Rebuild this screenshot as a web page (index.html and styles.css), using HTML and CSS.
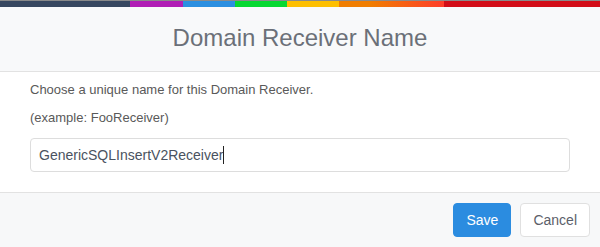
FILE: index.html
```html
<!DOCTYPE html>
<html lang="en">
<head>
  <meta charset="UTF-8">
  <meta name="viewport" content="width=device-width, initial-scale=1.0">
  <title>Domain Receiver Name</title>
  <link rel="stylesheet" href="styles.css">
</head>
<body>
  <div class="modal">
    <!-- coloured strip on top -->
    <div class="strip">
      <span class="s1"></span>
      <span class="s2"></span>
      <span class="s3"></span>
      <span class="s4"></span>
      <span class="s5"></span>
      <span class="s6"></span>
      <span class="s7"></span>
    </div>

    <div class="modal_header">
      <h3>Domain Receiver Name</h3>
    </div>

    <div class="modal_body">
      <p>Choose a unique name for this Domain Receiver.</p>
      <p>(example: FooReceiver)</p>
      <div class="field">GenericSQLInsertV2Receiver<span class="caret"></span></div>
    </div>

    <div class="modal_footer">
      <button class="btn btn_save">Save</button>
      <button class="btn btn_cancel">Cancel</button>
    </div>
  </div>
</body>
</html>
```
FILE: styles.css
```css
* {
  box-sizing: border-box;
  margin: 0;
}
body {
  background: #fff;
  font-family: "Liberation Sans", Arial, sans-serif;
}
.modal {
  width: 600px;
  height: 247px;
  border-top: 1px solid #8a8a8a;
  display: flex;
  flex-direction: column;
}

.strip {
  display: flex;
  height: 6px;
}
.strip span { height: 100%; }
.s1 { width: 130px; background: #374760; }
.s2 { width: 53px; background: #b01eb5; }
.s3 { width: 52px; background: #2b8fe0; }
.s4 { width: 52px; background: #06d831; }
.s5 { width: 52px; background: #fdbf00; }
.s6 { width: 105px; background: linear-gradient(to right, #f07d00 30%, #fe3d2a); }
.s7 { flex: 1; background: #d20d17; }

.modal_header {
  background: #f8f9fa;
  height: 65px;
  border-bottom: 1px solid #e2e2e2;
  display: flex;
  align-items: center;
  justify-content: center;
}
.modal_header h3 {
  font-weight: normal;
  font-size: 24px;
  color: #6b7078;
  padding-bottom: 2px;
}

.modal_body {
  padding: 10px 30px 20px;
  height: 120px;
  color: #595959;
  font-size: 13px;
}
.modal_body p {
  line-height: 15px;
  margin-bottom: 13px;
}
.field {
  margin-top: 12px;
  height: 34px;
  width: 540px;
  border: 1px solid #ddd;
  border-radius: 4px;
  padding: 0 8px;
  display: flex;
  align-items: center;
  font-size: 14px;
  color: #4a5260;
}
.caret {
  display: inline-block;
  width: 1px;
  height: 18px;
  background: #222;
}

.modal_footer {
  flex: 1;
  background: #f7f8f9;
  border-top: 1px solid #e2e2e2;
  display: flex;
  justify-content: flex-end;
  align-items: flex-start;
  gap: 9px;
  padding: 10px 10px 0;
}
.btn {
  font-family: "Liberation Sans", Arial, sans-serif;
  font-size: 14px;
  height: 34px;
  border-radius: 4px;
  padding: 0 12px;
  cursor: pointer;
}
.btn_save {
  background: #2b8ce0;
  border: 1px solid #2b8ce0;
  color: #fff;
}
.btn_cancel {
  background: #fff;
  border: 1px solid #e0e0e0;
  color: #5b6069;
}
```
